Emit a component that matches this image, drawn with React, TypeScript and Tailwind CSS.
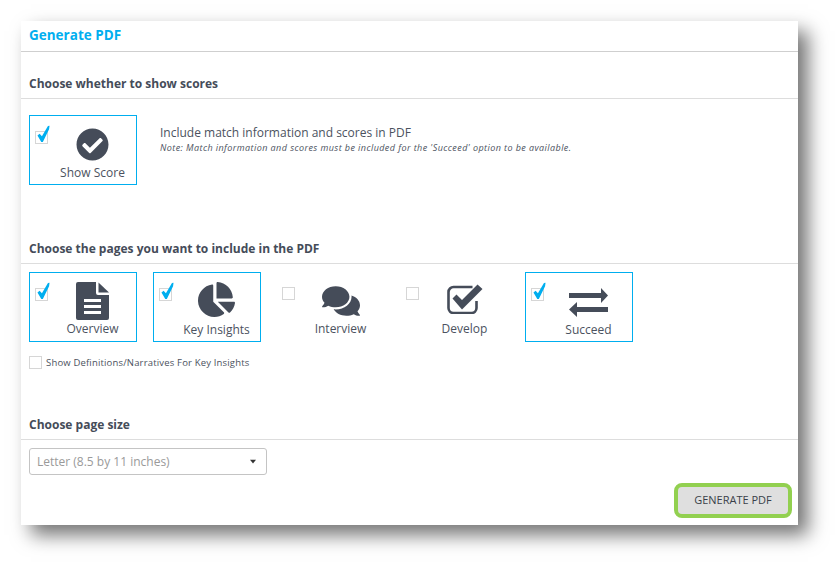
import React from "react";
import { FaCheckCircle, FaChartPie, FaComments } from "react-icons/fa";

const dark = "#454c59";

function Check({ on }: { on: boolean }) {
  return (
    <span className="relative block w-[13px] h-[13px] border border-[#d6d6d6] bg-white">
      {on && (
        <svg viewBox="0 0 14 18" className="absolute left-[1px] top-[-7px] w-[13px] h-[18px]">
          <path d="M0.5 10.5 L2.8 8.6 L5.3 11.5 L11.8 0.5 L13.5 0 L13 4 L6.3 17.5 L4.6 17.5 Z" fill="#00aeef" />
        </svg>
      )}
    </span>
  );
}

function DocIcon() {
  return (
    <svg viewBox="0 0 33 38" className="w-[33px] h-[38px]">
      <path d="M2 0H20V11a2 2 0 0 0 2 2H33V36a2 2 0 0 1-2 2H2a2 2 0 0 1-2-2V2a2 2 0 0 1 2-2Z" fill={dark} />
      <path d="M22.500 0.500L33 10.500H22.500Z" fill={dark} />
      <path d="M8 17h17v3H8zM8 23h17v3H8zM8 29h17v3H8z" fill="#fff" />
    </svg>
  );
}

function DevelopIcon() {
  return (
    <svg viewBox="0 0 36 30" className="w-[36px] h-[30px]">
      <path d="M29.500 17v7a5 5 0 0 1-5 5H6.500a5 5 0 0 1-5-5V8a5 5 0 0 1 5-5h19" fill="none" stroke={dark} strokeWidth="2.6" />
      <path d="M5.500 14.500L9.500 10.500L15 16L30.500 0.500L35.500 5L15 25.500Z" fill={dark} />
    </svg>
  );
}

function SwapIcon() {
  return (
    <svg viewBox="0 0 39 29" className="w-[39px] h-[29px]">
      <path d="M0 5H32V0L39 7.500L32 15V10H0Z" fill={dark} />
      <path d="M39 19H8V14L0 21.500L8 29V24H39Z" fill={dark} />
    </svg>
  );
}

function Option({ label, on, icon, iconClass, labelClass }: { label: string; on: boolean; icon: React.ReactNode; iconClass: string; labelClass: string }) {
  return (
    <div className={`w-[108px] h-[70px] border flex flex-col items-center ${on ? "border-[#00aeef]" : "border-transparent"} relative`}>
      <div className={`absolute ${on ? "left-[5px] top-[15px]" : "left-[4px] top-[14px]"}`}><Check on={on} /></div>
      <div className={`h-[48px] flex items-end justify-center ml-[19px] text-[#454c59] ${iconClass}`}>{icon}</div>
      <div className={`text-[12px] leading-[16px] ml-[19px] text-[#4b5260] ${labelClass}`}>{label}</div>
    </div>
  );
}

function Heading({ children }: { children: React.ReactNode }) {
  return (
    <div className="h-[24px] px-[8px] pt-[1px] border-b border-[#dddddd] text-[12px] font-bold leading-[16px] text-[#454c59]">{children}</div>
  );
}

export default function App() {
  return (
    <div className="w-[840px] h-[567px] bg-white pt-[21px] pl-[21px] overflow-hidden" style={{ fontFamily: '"Open Sans", sans-serif' }}>
      <div className="w-[777px] h-[504px] bg-white shadow-[10px_10px_18px_rgba(0,0,0,0.55)] flex flex-col">
        <div className="h-[31px] px-[8px] pt-[6px] border-b border-[#cfcfcf] text-[13.500px] leading-[16px] font-bold text-[#00aeef]">Generate PDF</div>

        <div className="mt-[23px]"><Heading>Choose whether to show scores</Heading></div>
        <div className="mt-[16px] px-[8px] flex">
          <div className="w-[108px] h-[70px] border border-[#00aeef] flex flex-col items-center relative">
            <div className="absolute left-[5px] top-[15px]"><Check on /></div>
            <div className="mt-[12px] ml-[19px] text-[#454c59]"><FaCheckCircle size={33} /></div>
            <div className="text-[12px] leading-[16px] mt-[4px] ml-[19px] text-[#4b5260]">Show Score</div>
          </div>
          <div className="ml-[23px] mt-[10px]">
            <div className="text-[12px] leading-[16px] text-[#4b5260]">Include match information and scores in PDF</div>
            <div className="text-[9px] leading-[11px] mt-[1px] italic tracking-[0.43px] text-[#4b5260]">Note: Match information and scores must be included for the 'Succeed' option to be available.</div>
          </div>
        </div>

        <div className="mt-[55px]"><Heading>Choose the pages you want to include in the PDF</Heading></div>
        <div className="mt-[8px] px-[8px] flex gap-[16px]">
          <Option label="Overview" on icon={<DocIcon />} iconClass="pb-[1px]" labelClass="" />
          <Option label="Key Insights" on icon={<FaChartPie size={37} />} iconClass="pb-[3px]" labelClass="mt-[1px]" />
          <Option label="Interview" on={false} icon={<FaComments size={38} />} iconClass="pb-[1px]" labelClass="" />
          <Option label="Develop" on={false} icon={<DevelopIcon />} iconClass="pb-[7px]" labelClass="" />
          <Option label="Succeed" on icon={<SwapIcon />} iconClass="pb-[4px]" labelClass="mt-[1px]" />
        </div>
        <div className="mt-[14px] px-[8px] flex items-center gap-[4px]">
          <span className="block w-[13px] h-[13px] border border-[#d6d6d6]" />
          <span className="text-[9.500px] leading-[13px] text-[#4b5260] tracking-[0.17px]">Show Definitions/Narratives For Key Insights</span>
        </div>

        <div className="mt-[47px]"><Heading>Choose page size</Heading></div>
        <div className="mt-[8px] px-[8px]">
          <div className="w-[238px] h-[27px] border border-[#c4c4c4] rounded-[3px] flex items-center justify-between pl-[7px] pr-[10px]">
            <span className="text-[12px] pt-[1px] text-[#9a9a9a]">Letter (8.5 by 11 inches)</span>
            <svg viewBox="0 0 8 5" className="w-[6px] h-[5px]"><path d="M0 0h8L4 5z" fill="#333" /></svg>
          </div>
        </div>
        <div className="mt-[8px] flex justify-end pr-[6px]">
          <div className="w-[118px] h-[35px] rounded-[8px] border-[4px] border-[#92d050] bg-[#dfdfdf] flex items-center justify-center text-[11px] text-[#3a3f4a]">GENERATE PDF</div>
        </div>
      </div>
    </div>
  );
}
